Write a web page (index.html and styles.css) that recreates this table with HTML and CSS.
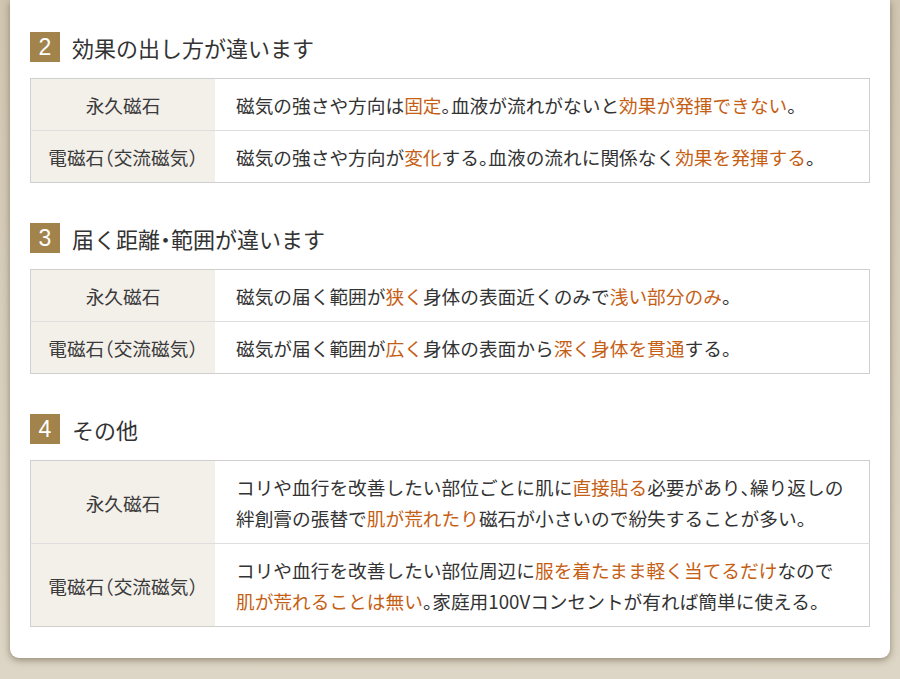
FILE: index.html
```html
<!DOCTYPE html>
<html lang="ja">
<head>
    <meta charset="UTF-8">
    <meta name="viewport" content="width=device-width, initial-scale=1.0">
    <title>永久磁石と電磁石の違い</title>
    <link rel="stylesheet" href="styles.css">
</head>
<body>
    <div class="card">
        <!-- 2 -->
        <section class="point">
            <h2 class="point-title"><span class="num">2</span>効果の出し方が違います</h2>
            <table class="compare">
                <tr>
                    <th>永久磁石</th>
                    <td>磁気の強さや方向は<em>固定</em><span class="h">。</span>血液が流れがないと<em>効果が発揮できない</em><span class="h">。</span></td>
                </tr>
                <tr>
                    <th>電磁石<span class="h">（</span>交流磁気<span class="h">）</span></th>
                    <td>磁気の強さや方向が<em>変化</em>する<span class="h">。</span>血液の流れに関係なく<em>効果を発揮する</em><span class="h">。</span></td>
                </tr>
            </table>
        </section>

        <!-- 3 -->
        <section class="point">
            <h2 class="point-title"><span class="num">3</span>届く距離<span class="h">・</span>範囲が違います</h2>
            <table class="compare">
                <tr>
                    <th>永久磁石</th>
                    <td>磁気の届く範囲が<em>狭く</em>身体の表面近くのみで<em>浅い部分のみ</em><span class="h">。</span></td>
                </tr>
                <tr>
                    <th>電磁石<span class="h">（</span>交流磁気<span class="h">）</span></th>
                    <td>磁気が届く範囲が<em>広く</em>身体の表面から<em>深く身体を貫通</em>する<span class="h">。</span></td>
                </tr>
            </table>
        </section>

        <!-- 4 -->
        <section class="point">
            <h2 class="point-title"><span class="num">4</span>その他</h2>
            <table class="compare">
                <tr>
                    <th>永久磁石</th>
                    <td>コリや血行を改善したい部位ごとに肌に<em>直接貼る</em>必要があり<span class="h">、</span>繰り返しの<br>絆創膏の張替で<em>肌が荒れたり</em>磁石が小さいので紛失することが多い<span class="h">。</span></td>
                </tr>
                <tr>
                    <th>電磁石<span class="h">（</span>交流磁気<span class="h">）</span></th>
                    <td>コリや血行を改善したい部位周辺に<em>服を着たまま軽く当てるだけ</em>なので<br><em>肌が荒れることは無い</em><span class="h">。</span>家庭用100Vコンセントが有れば簡単に使える<span class="h">。</span></td>
                </tr>
            </table>
        </section>
    </div>
</body>
</html>
```

FILE: styles.css
```css
html, body {
    margin: 0;
    padding: 0;
}
body {
    background: #d6cdbb;
    background-image: linear-gradient(180deg, #d0c6b1 0%, #ddd5c5 100%);
    padding: 0 10px 21px 10px;
    font-family: "Noto Sans CJK JP", "Noto Sans", sans-serif;
    color: #333;
}
.card {
    background: #fff;
    border-radius: 0 0 9px 9px;
    box-shadow: 0 2px 7px rgba(70, 58, 36, 0.5);
    padding: 32px 20px 31px 20px;
}
.point {
    margin-bottom: 40px;
}
.point:last-child {
    margin-bottom: 0;
}
.point-title {
    display: flex;
    align-items: center;
    margin: 0 0 16px 0;
    height: 30px;
    font-size: 22px;
    font-weight: normal;
    color: #333;
}
.num {
    display: inline-block;
    width: 30px;
    height: 30px;
    line-height: 30px;
    margin-right: 12px;
    background: #a3834c;
    color: #fff;
    text-align: center;
    font-family: "Liberation Sans", Arial, sans-serif;
    font-size: 23px;
}
.h {
    font-feature-settings: "halt";
}
.compare {
    width: 100%;
    border-collapse: collapse;
    border: 1px solid #cfcfcf;
    font-size: 18.7px;
    line-height: 31px;
}
.compare tr + tr th,
.compare tr + tr td {
    border-top: 1px solid #dedede;
}
.compare th {
    width: 184px;
    padding: 10px 0;
    background: #f3f0ea;
    font-weight: normal;
    text-align: center;
    color: #3a3a3a;
}
.compare td {
    padding: 10px 10px 10px 21px;
    color: #333;
}
.compare em {
    font-style: normal;
    color: #c65f16;
}
```
